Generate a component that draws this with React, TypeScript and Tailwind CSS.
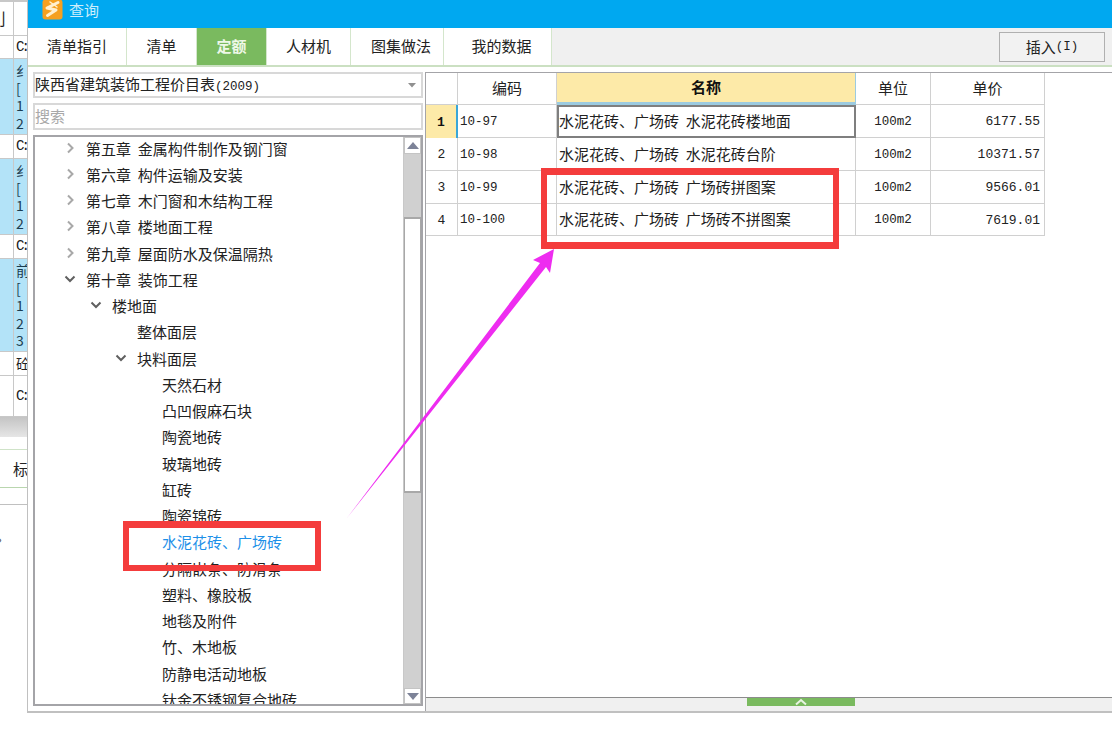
const cjk = "font-['Noto_Sans_CJK_SC','Noto_Sans_CJK_JP',sans-serif]";
const mono = "font-['Liberation_Mono','Noto_Sans_CJK_SC',monospace]";

type Node = { t: string; level: number; arrow?: 'r' | 'd'; active?: boolean };
const tree: Node[] = [
  { t: '第五章  金属构件制作及钢门窗', level: 0, arrow: 'r' },
  { t: '第六章  构件运输及安装', level: 0, arrow: 'r' },
  { t: '第七章  木门窗和木结构工程', level: 0, arrow: 'r' },
  { t: '第八章  楼地面工程', level: 0, arrow: 'r' },
  { t: '第九章  屋面防水及保温隔热', level: 0, arrow: 'r' },
  { t: '第十章  装饰工程', level: 0, arrow: 'd' },
  { t: '楼地面', level: 1, arrow: 'd' },
  { t: '整体面层', level: 2 },
  { t: '块料面层', level: 2, arrow: 'd' },
  { t: '天然石材', level: 3 },
  { t: '凸凹假麻石块', level: 3 },
  { t: '陶瓷地砖', level: 3 },
  { t: '玻璃地砖', level: 3 },
  { t: '缸砖', level: 3 },
  { t: '陶瓷锦砖', level: 3 },
  { t: '水泥花砖、广场砖', level: 3, active: true },
  { t: '分隔嵌条、防滑条', level: 3 },
  { t: '塑料、橡胶板', level: 3 },
  { t: '地毯及附件', level: 3 },
  { t: '竹、木地板', level: 3 },
  { t: '防静电活动地板', level: 3 },
  { t: '钛金不锈钢复合地砖', level: 3 },
];

const indent = ['pl-[51px]', 'pl-[77px]', 'pl-[102px]', 'pl-[127px]'];

function Arrow({ dir }: { dir: 'r' | 'd' }) {
  return (
    <svg width="12" height="12" viewBox="0 0 12 12" className="absolute top-[6px] ml-[-22px]">
      {dir === 'r' ? (
        <path d="M4 1.5 L8.5 6 L4 10.5" fill="none" stroke="#a8a8a8" strokeWidth="2" />
      ) : (
        <path d="M1.5 3.5 L6 8 L10.5 3.5" fill="none" stroke="#606060" strokeWidth="2" />
      )}
    </svg>
  );
}

function TreeRow({ n }: { n: Node }) {
  return (
    <div className={`relative h-[26.25px] leading-[26px] text-[15px] whitespace-pre ${indent[n.level]} ${n.active ? 'text-[#1e90e8]' : 'text-[#222222]'}`}>
      {n.arrow && <Arrow dir={n.arrow} />}
      {n.t}
    </div>
  );
}

const tabs = [
  { t: '清单指引', w: 'w-[99px]', x: '' },
  { t: '清单', w: 'w-[70px]', x: '' },
  { t: '定额', w: 'w-[70px]', x: '', on: true },
  { t: '人材机', w: 'w-[84px]', x: '' },
  { t: '图集做法', w: 'w-[93px]', x: 'pl-[8px]' },
  { t: '我的数据', w: 'w-[108px]', x: 'pl-[8px]' },
];

const rows = [
  { n: '1', code: '10-97', name: '水泥花砖、广场砖  水泥花砖楼地面', price: '6177.55', h: 'h-[33px]' },
  { n: '2', code: '10-98', name: '水泥花砖、广场砖  水泥花砖台阶', price: '10371.57', h: 'h-[33px]' },
  { n: '3', code: '10-99', name: '水泥花砖、广场砖  广场砖拼图案', price: '9566.01', h: 'h-[33px]' },
  { n: '4', code: '10-100', name: '水泥花砖、广场砖  广场砖不拼图案', price: '7619.01', h: 'h-[32px]' },
];

const cell = 'border-r border-b border-[#d0d0d0]';

const strip = [
  { h: 'h-[34px]', blue: false, lines: [] as string[], mono: false },
  { h: 'h-[23px]', blue: false, lines: ['C:'], mono: true },
  { h: 'h-[76px]', blue: true, lines: ['纟', '[', '1', '2'], mono: false },
  { h: 'h-[24px]', blue: false, lines: ['C:'], mono: true },
  { h: 'h-[76px]', blue: true, lines: ['纟', '[', '1', '2'], mono: false },
  { h: 'h-[24px]', blue: false, lines: ['C:'], mono: true },
  { h: 'h-[93px]', blue: true, lines: ['前', '[', '1', '2', '3'], mono: false },
  { h: 'h-[24px]', blue: false, lines: ['砼'], mono: false },
  { h: 'h-[41px]', blue: false, lines: ['C:'], mono: true },
];

function LeftStrip() {
  return (
    <div className={`w-[27px] shrink-0 flex flex-col overflow-hidden text-[14px] text-[#222222] border-t-2 border-[#c8c8c8] ${cjk}`}>
      {strip.map((s, i) => (
        <div key={i} className={`${s.h} shrink-0 flex border-b border-[#c8c8c8] ${s.blue ? 'bg-[#b3e3f8]' : 'bg-white'}`}>
          <div className="w-[14px] shrink-0 border-r border-[#c8c8c8] overflow-hidden leading-none pt-[8px] text-[16px]">
            {i === 0 ? <span className="ml-[-10px] block">刂</span> : null}
          </div>
          <div className={`pl-[2px] flex-1 overflow-hidden whitespace-nowrap ${s.mono ? `${mono} text-[14px] tracking-[-3px]` : ''} ${s.blue ? 'leading-[17.5px] pt-[3px] text-[#1c3c50]' : i === 8 ? 'leading-[40px]' : 'leading-[23px]'}`}>
            {s.lines.map((l, j) => (
              <div key={j} className={s.blue ? 'h-[17.5px]' : ''}>{l}</div>
            ))}
          </div>
        </div>
      ))}
      <div className="h-[20px] shrink-0 bg-gradient-to-b from-[#c4c4c4] to-[#e6e6e6]" />
      <div className="h-[13px] shrink-0 bg-white border-b border-[#cfe3c8]" />
      <div className="h-[38px] shrink-0 bg-white border-b border-[#b9d6ae] pl-[13px] leading-[38px] text-[15px] whitespace-nowrap overflow-hidden">标</div>
      <div className="h-[17px] shrink-0 bg-white border-b border-[#c0c0c0]" />
      <div className="h-[60px] shrink-0 bg-white text-[12px] leading-[68px] text-[#444444] ml-[-2px]">›</div>
    </div>
  );
}

function Combo() {
  return (
    <div className="h-[26px] border-2 border-[#d8d8d8] bg-white flex items-center justify-between pr-[5px] text-[15px] text-[#222222]">
      <span className="whitespace-pre">陕西省建筑装饰工程价目表<span className={`${mono} text-[12.5px]`}>(2009)</span></span>
      <svg width="8" height="5" viewBox="0 0 8 5"><path d="M0 0 H8 L4 4.5 Z" fill="#909090" /></svg>
    </div>
  );
}

function ScrollBar() {
  return (
    <div className="w-[18px] shrink-0 flex flex-col bg-[#d0d0d0] border-l border-[#c8c8c8]">
      <div className="h-[17px] bg-white border border-[#c4c4c4] flex items-center justify-center">
        <svg width="12" height="7" viewBox="0 0 12 7"><path d="M0 7 L6 0 L12 7 Z" fill="#7d8398" /></svg>
      </div>
      <div className="h-[63px]" />
      <div className="h-[276px] bg-white border-y-2 border-x border-[#a8a8a8]" />
      <div className="flex-1" />
      <div className="h-[16px] bg-white border border-[#c4c4c4] flex items-center justify-center">
        <svg width="12" height="7" viewBox="0 0 12 7"><path d="M0 0 L12 0 L6 7 Z" fill="#7d8398" /></svg>
      </div>
    </div>
  );
}

export default function App() {
  return (
    <div className={`relative w-[1112px] h-[756px] bg-white overflow-hidden flex items-start ${cjk}`}>
      <LeftStrip />

      <div className="flex-1 h-[713px] flex flex-col border-l border-b-2 border-[#c0c0c0] bg-white">
        {/* title bar */}
        <div className="h-[28px] shrink-0 bg-[#00a8f0] flex items-center overflow-hidden pl-[14px]">
          <svg width="21" height="21" viewBox="0 0 21 21" className="mt-[-10px] shrink-0">
            <rect x="0.5" y="0.5" width="20" height="20" rx="3" fill="#f5a020" />
            <path d="M16 3.5 L5 9 L14 11 L5.5 16.5" fill="none" stroke="#fff0d0" strokeWidth="3" strokeLinejoin="round" strokeLinecap="round" />
            <path d="M8 3 L15 8" stroke="#fff0d0" strokeWidth="1.5" strokeLinecap="round" />
          </svg>
          <span className="ml-[6px] mt-[-10px] text-[15px] text-[#cdeefc] leading-none">查询</span>
        </div>

        {/* tab bar */}
        <div className="h-[39px] shrink-0 bg-[#f0f0f0] border-b-2 border-[#cbe0c2] flex relative">
          {tabs.map(t => (
            <div
              key={t.t}
              className={`${t.w} ${t.x} shrink-0 flex items-center justify-center text-[15px] border-r border-[#d4e6cc] ${t.on ? 'bg-[#7aba5f] text-[#eef8e8] font-bold' : 'bg-white text-[#222222]'}`}
            >
              {t.t}
            </div>
          ))}
          <div className="absolute right-[7px] top-[4px] w-[106px] h-[30px] border border-[#b0b0b0] bg-[#f2f2f2] flex items-center justify-center text-[15px] text-[#222222] whitespace-pre">
            插入<span className={`${mono} text-[12.5px]`}>(I)</span>
          </div>
        </div>

        {/* body */}
        <div className="flex-1 min-h-0 flex pt-[5px]">
          {/* left column */}
          <div className="w-[397px] shrink-0 flex flex-col pl-[5px] pr-[2px] gap-[5px] pb-[5px]">
            <Combo />
            <div className="h-[27px] border-2 border-[#d8d8d8] bg-white text-[15px] leading-[22px] text-[#a8a8a8]">搜索</div>
            <div className="flex-1 min-h-0 flex border-2 border-[#a4a4a8] bg-white">
              <div className="flex-1 min-w-0 overflow-hidden -mt-[1.3px]">
                {tree.map(n => (
                  <TreeRow key={n.t} n={n} />
                ))}
              </div>
              <ScrollBar />
            </div>
          </div>

          {/* right column */}
          <div className="flex-1 min-w-0 flex flex-col border-l border-t border-[#a4a4a8]">
            <div className="flex-1 min-h-0">
              <div className="w-[619px] text-[14px] text-[#222222]">
                <div className="flex h-[32px]">
                  <div className={`w-[32px] ${cell}`} />
                  <div className={`w-[99px] ${cell} flex items-center justify-center text-[15px]`}>编码</div>
                  <div className="w-[299px] border-r border-b-[3px] border-[#9ccbe0] bg-[#fdeaa8] flex items-center justify-center text-[15px] font-bold text-[#111111]">名称</div>
                  <div className={`w-[75px] ${cell} flex items-center justify-center text-[15px]`}>单位</div>
                  <div className={`w-[114px] ${cell} flex items-center justify-center text-[15px]`}>单价</div>
                </div>
                {rows.map((r, i) => (
                  <div key={r.n} className={`flex ${r.h}`}>
                    <div className={`w-[32px] flex items-center justify-center pt-[2px] ${mono} text-[13px] ${i === 0 ? 'bg-[#fdeaa8] font-bold text-[#111111] border-r-2 border-[#3aa6d8]' : cell}`}>{r.n}</div>
                    <div className={`w-[99px] ${cell} flex items-center pl-[2px] pt-[2px] ${mono} text-[12.5px]`}>{r.code}</div>
                    <div className={`w-[299px] flex items-center text-[15px] whitespace-pre ${i === 0 ? 'border-2 border-[#7f7f7f]' : `${cell} pl-[2px]`}`}>{r.name}</div>
                    <div className={`w-[75px] ${cell} flex items-center justify-center pt-[2px] ${mono} text-[12.5px]`}>100m2</div>
                    <div className={`w-[114px] ${cell} flex items-center justify-end pr-[4px] pt-[2px] ${mono} text-[13px]`}>{r.price}</div>
                  </div>
                ))}
              </div>
            </div>
            {/* splitter */}
            <div className="h-[14px] shrink-0 bg-[#f0f0f0] border-t border-[#8c8c8c] pl-[321px]">
              <div className="w-[108px] h-[8px] bg-[#7aba5f] flex justify-center items-start">
                <svg width="14" height="8" viewBox="0 0 14 8"><path d="M2 6.5 L7 2 L12 6.5" fill="none" stroke="#e8f4e2" strokeWidth="2" /></svg>
              </div>
            </div>
          </div>
        </div>
      </div>

      {/* annotations over the screenshot */}
      <div className="absolute left-[123px] top-[521px] w-[198px] h-[50px] border-x-[6px] border-t-[7px] border-b-[6px] border-[#f43c3c]" />
      <div className="absolute left-[541px] top-[168px] w-[298px] h-[81px] border-x-[6px] border-t-[7px] border-b-[7px] border-[#f43c3c]" />
      <svg className="absolute left-0 top-0 pointer-events-none" width="1112" height="756" viewBox="0 0 1112 756">
        <polygon points="347,518 540,263 533,260 554,249 550,273 546,267" fill="#ee2cf0" />
      </svg>
    </div>
  );
}
